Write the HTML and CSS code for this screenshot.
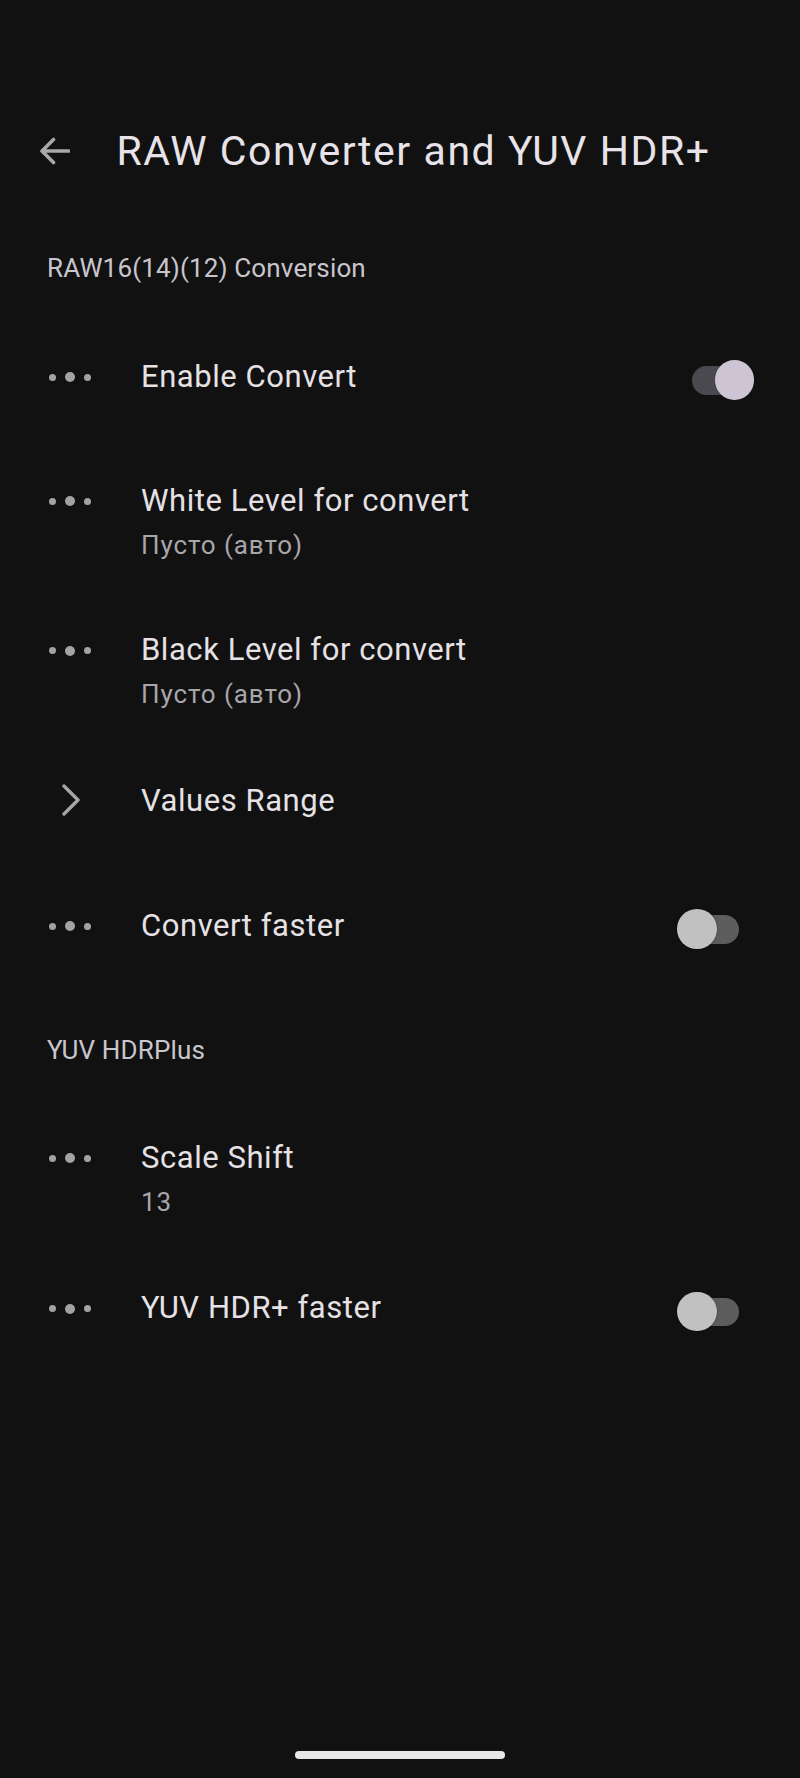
FILE: index.html
```html
<!DOCTYPE html>
<html lang="en">
<head>
<meta charset="utf-8">
<title>RAW Converter and YUV HDR+</title>
<link rel="stylesheet" href="styles.css">
</head>
<body>
<div class="page">
  <header class="toolbar">
    <svg class="back" width="31" height="28" viewBox="0 0 31 28" aria-hidden="true">
      <path d="M3 14H29.5M14.5 2.5L3 14L14.5 25.5" fill="none" stroke="#a9a7ac" stroke-width="3.6" stroke-linecap="round" stroke-linejoin="round"/>
    </svg>
    <h1 class="title">RAW Converter and YUV HDR+</h1>
  </header>

  <main class="list">
    <div class="category">RAW16(14)(12) Conversion</div>

    <div class="row single">
      <span class="icon dots"><i class="d s"></i><i class="d b"></i><i class="d s"></i></span>
      <div class="text"><div class="ttl">Enable Convert</div></div>
      <span class="switch on"><span class="track"></span><span class="thumb"></span></span>
    </div>

    <div class="row double">
      <span class="icon dots"><i class="d s"></i><i class="d b"></i><i class="d s"></i></span>
      <div class="text"><div class="ttl">White Level for convert</div><div class="sum">Пусто (авто)</div></div>
    </div>

    <div class="row double">
      <span class="icon dots"><i class="d s"></i><i class="d b"></i><i class="d s"></i></span>
      <div class="text"><div class="ttl">Black Level for convert</div><div class="sum">Пусто (авто)</div></div>
    </div>

    <div class="row single">
      <span class="icon">
        <svg width="20" height="32" viewBox="0 0 20 32" aria-hidden="true">
          <path d="M3 2L17 16L3 30" fill="none" stroke="#a6a4a8" stroke-width="3.4" stroke-linecap="round" stroke-linejoin="round"/>
        </svg>
      </span>
      <div class="text"><div class="ttl">Values Range</div></div>
    </div>

    <div class="row single">
      <span class="icon dots"><i class="d s"></i><i class="d b"></i><i class="d s"></i></span>
      <div class="text"><div class="ttl">Convert faster</div></div>
      <span class="switch off"><span class="track"></span><span class="thumb"></span></span>
    </div>

    <div class="category">YUV HDRPlus</div>

    <div class="row double">
      <span class="icon dots"><i class="d s"></i><i class="d b"></i><i class="d s"></i></span>
      <div class="text"><div class="ttl">Scale Shift</div><div class="sum">13</div></div>
    </div>

    <div class="row single">
      <span class="icon dots"><i class="d s"></i><i class="d b"></i><i class="d s"></i></span>
      <div class="text"><div class="ttl">YUV HDR+ faster</div></div>
      <span class="switch off"><span class="track"></span><span class="thumb"></span></span>
    </div>
  </main>

  <footer class="navbar"><span class="handle"></span></footer>
</div>
</body>
</html>
```

FILE: styles.css
```css
* { box-sizing: border-box; }

html, body {
  margin: 0;
  padding: 0;
  background: #111111;
}

body {
  font-family: Roboto, "Noto Sans", "DejaVu Sans", sans-serif;
  color: #e6e1e5;
}

.page {
  min-height: 100vh;
  display: flex;
  flex-direction: column;
}

.toolbar {
  display: flex;
  align-items: center;
  height: 205.5px;
  padding: 111px 0 14.5px 39px;
}

.back {
  flex: none;
  display: block;
}

.title {
  margin: 0 0 0 46.5px;
  font-size: 41px;
  font-weight: 400;
  line-height: 80px;
  letter-spacing: 1.55px;
  color: #e8e3e8;
  white-space: nowrap;
}

.list {
  display: flex;
  flex-direction: column;
}

.category {
  height: 108px;
  padding: 46px 0 0 47px;
  font-size: 26px;
  line-height: 32px;
  letter-spacing: 0.15px;
  color: #c9c5cc;
}

.row {
  display: flex;
  align-items: flex-start;
  padding: 0 46px 0 46px;
}

.row.single {
  height: 125px;
  padding-top: 39px;
}

.row.double {
  height: 149.5px;
  padding-top: 38px;
}

.icon {
  flex: none;
  width: 48px;
  height: 47px;
  display: flex;
  align-items: center;
  justify-content: center;
  margin-right: 47px;
}

.icon svg { display: block; margin-left: 1px; }

.dots {
  gap: 9px;
  padding-top: 2px;
}

.d {
  display: block;
  flex: none;
  border-radius: 50%;
  background: #a3a3a5;
}

.d.s { width: 7px; height: 7px; }
.d.b { width: 10px; height: 10px; }

.text {
  flex: 1;
  min-width: 0;
}

.ttl {
  font-size: 31px;
  line-height: 47px;
  letter-spacing: 0.55px;
  color: #e6e1e5;
  white-space: nowrap;
}

.sum {
  font-size: 26px;
  line-height: 43px;
  letter-spacing: 0.9px;
  color: #a8a5ab;
  white-space: nowrap;
}

.switch {
  flex: none;
  position: relative;
  width: 77px;
  height: 40px;
  margin-top: 7.5px;
}

.switch .track {
  position: absolute;
  top: 6px;
  width: 58px;
  height: 28.5px;
  border-radius: 14.5px;
}

.switch .thumb {
  position: absolute;
  top: 0;
  width: 39.5px;
  height: 39.5px;
  border-radius: 50%;
}

.switch.on .track { left: 15px; background: #4b4950; }
.switch.on .thumb { left: 37.5px; background: #cdc5d4; box-shadow: 0 0 1px rgba(0,0,0,0.6); }

.switch.off .track { left: 4px; background: #5d5d5d; }
.switch.off .thumb { left: 0; background: #c1c1c1; box-shadow: 0 0 1.5px rgba(0,0,0,0.7); }

.navbar {
  margin-top: auto;
  height: 46px;
  display: flex;
  justify-content: center;
  align-items: center;
}

.handle {
  display: block;
  width: 210px;
  height: 8px;
  border-radius: 4px;
  background: #e8e8e8;
}
```
